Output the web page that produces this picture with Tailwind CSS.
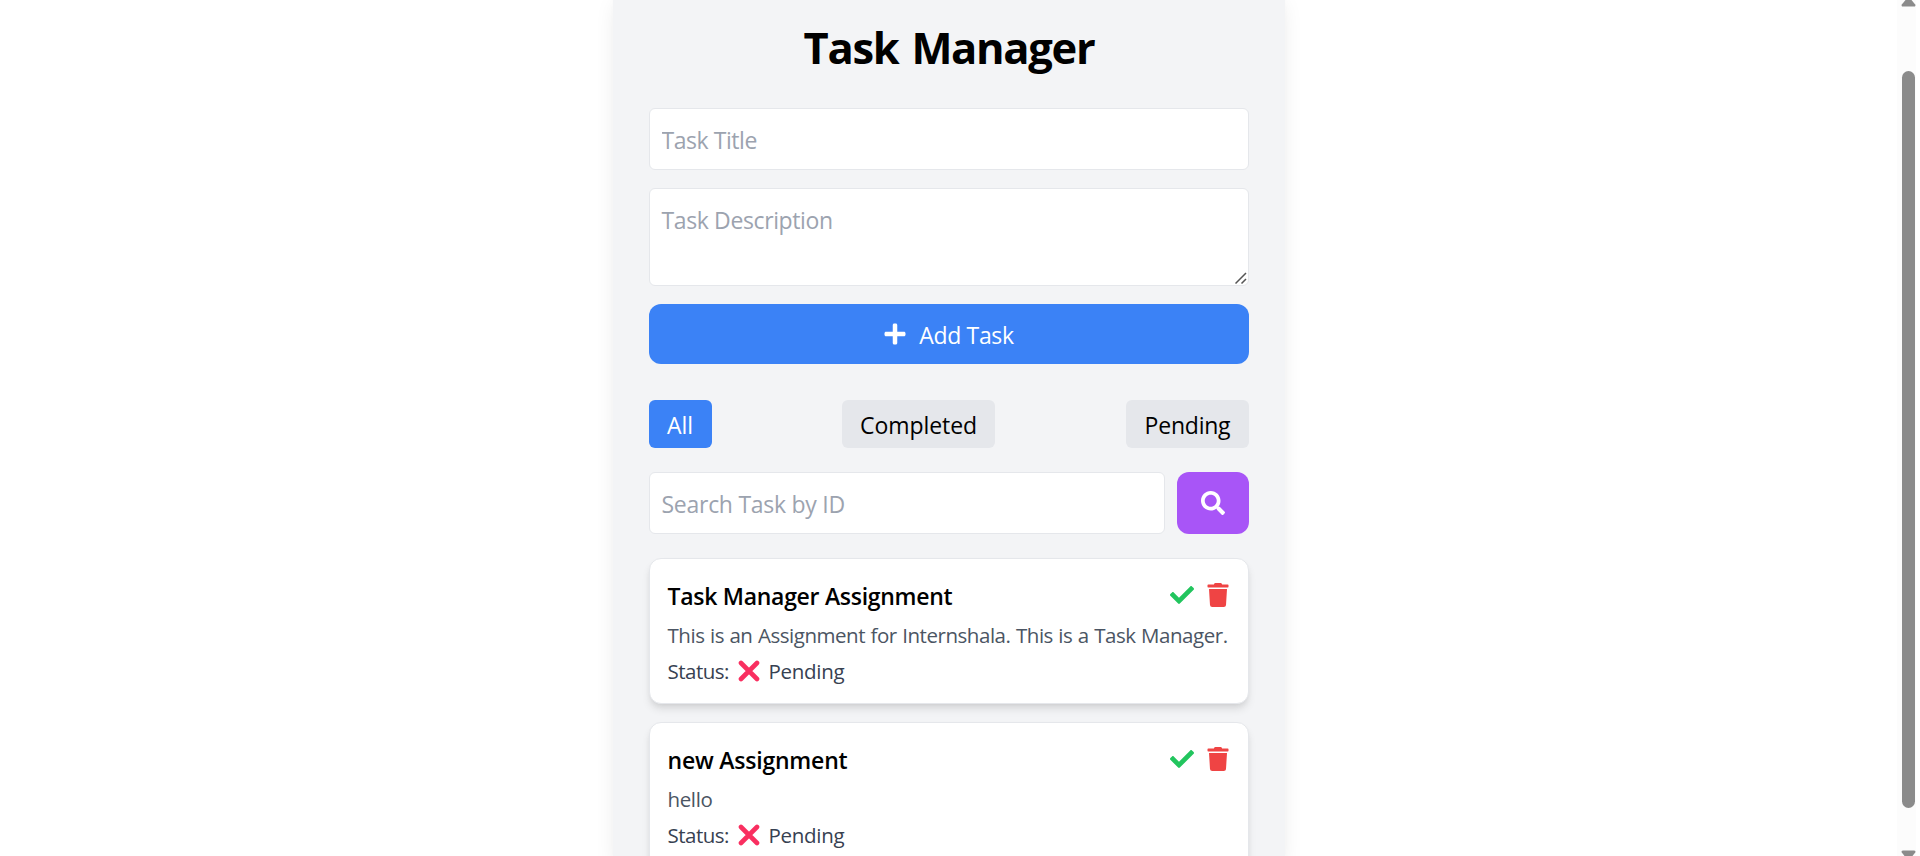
<!DOCTYPE html>
<html lang="en">
<head>
<meta charset="utf-8">
<title>Task Manager</title>
<script src="https://cdn.jsdelivr.net/npm/@tailwindcss/browser@4"></script>
</head>
<body class="h-[856px] overflow-hidden bg-white text-black font-['Open_Sans','Noto_Sans',sans-serif] text-[23px] leading-9">
<svg class="hidden">
  <symbol id="check" viewBox="0 0 512 512"><path d="M173.898 439.404l-166.4-166.4c-9.997-9.997-9.997-26.206 0-36.204l36.203-36.204c9.997-9.998 26.207-9.998 36.204 0L192 312.69 432.095 72.596c9.997-9.997 26.207-9.997 36.204 0l36.203 36.204c9.997 9.997 9.997 26.206 0 36.204l-294.4 294.401c-9.998 9.997-26.207 9.997-36.204-.001z"/></symbol>
  <symbol id="trash" viewBox="0 0 448 512"><path d="M432 32H312l-9.4-18.7A24 24 0 0 0 281.1 0H166.8a23.72 23.72 0 0 0-21.4 13.3L136 32H16A16 16 0 0 0 0 48v32a16 16 0 0 0 16 16h416a16 16 0 0 0 16-16V48a16 16 0 0 0-16-16zM53.2 467a48 48 0 0 0 47.9 45h245.8a48 48 0 0 0 47.9-45L416 128H32z"/></symbol>
  <symbol id="cross" viewBox="0 0 22 22"><path d="M3 3L19 19M19 3L3 19" stroke="#f92f60" stroke-width="4.6" stroke-linecap="round" fill="none"/></symbol>
</svg>
<div class="flex h-full">
  <div class="flex h-full flex-1 justify-center">
    <main class="-mt-4 ml-[1px] h-[872px] w-[672px] shrink-0 rounded-t-xl bg-gray-100 px-9 pt-9 shadow-[0_15px_22.5px_-4.5px_rgba(0,0,0,0.1),0_6px_9px_-6px_rgba(0,0,0,0.1)]">
      <h1 class="h-[54px] pt-px text-center text-[43.5px] font-bold leading-[54px] tracking-[-1.3px] [word-spacing:3px]">Task Manager</h1>

      <input class="mt-[34px] block h-[62px] w-full rounded-md border border-gray-200 bg-white px-[11.5px] pt-0.5 tracking-[-0.45px] placeholder:text-[#9ca3af]" placeholder="Task Title">
      <div class="relative mt-[18px] h-[98px]">
        <textarea class="block h-full w-full resize-none rounded-md border border-gray-200 bg-white px-[11.5px] pt-[13px] tracking-[-0.38px] placeholder:text-[#9ca3af]" placeholder="Task Description"></textarea>
        <svg class="absolute bottom-0.5 right-0.5 size-3" viewBox="0 0 12 12" fill="none" stroke="#555" stroke-width="1.5"><path d="M.5 11.5L11 1M6.5 11.5L11 7"/></svg>
      </div>
      <button class="mt-[18px] flex h-[60px] w-full items-center justify-center gap-3 rounded-xl bg-[#3b82f6] pr-px text-white">
        <svg class="size-6" viewBox="0 0 448 512" fill="currentColor"><path d="M416 208H272V64c0-17.67-14.33-32-32-32h-32c-17.67 0-32 14.33-32 32v144H32c-17.67 0-32 14.33-32 32v32c0 17.67 14.33 32 32 32h144v144c0 17.67 14.33 32 32 32h32c17.67 0 32-14.33 32-32V304h144c17.67 0 32-14.33 32-32v-32c0-17.67-14.33-32-32-32z"/></svg>
        <span class="pt-0.5 tracking-[-0.35px]">Add Task</span>
      </button>

      <div class="mt-9 flex h-12 justify-between">
        <button class="w-[63px] rounded-md bg-[#3b82f6] pr-px pt-0.5 text-white">All</button>
        <button class="-ml-0.5 w-[153px] rounded-md bg-gray-200 pl-px pt-0.5 tracking-[-0.07px]">Completed</button>
        <button class="w-[123px] rounded-md bg-gray-200 pt-0.5 tracking-[-0.22px]">Pending</button>
      </div>

      <div class="mt-6 flex h-[62px] gap-3">
        <input class="min-w-0 flex-1 rounded-md border border-gray-200 bg-white px-[11.5px] pt-0.5 tracking-[-0.27px] placeholder:text-[#9ca3af]" placeholder="Search Task by ID">
        <button class="flex w-[72px] items-center justify-center rounded-xl bg-[#a855f7] text-white">
          <svg class="size-6" viewBox="0 0 512 512" fill="currentColor"><path d="M505 442.7L405.3 343c-4.5-4.5-10.6-7-17-7H372c27.6-35.3 44-79.7 44-128C416 93.1 322.9 0 208 0S0 93.1 0 208s93.1 208 208 208c48.3 0 92.7-16.4 128-44v16.3c0 6.4 2.5 12.5 7 17l99.7 99.7c9.4 9.4 24.6 9.4 33.9 0l28.3-28.3c9.4-9.4 9.4-24.6.1-34zM208 336c-70.7 0-128-57.2-128-128 0-70.7 57.2-128 128-128 70.7 0 128 57.2 128 128 0 70.7-57.2 128-128 128z"/></svg>
        </button>
      </div>

      <ul class="-mx-6 mt-3 flex h-[310px] flex-col gap-[18px] overflow-hidden px-6 pt-3">
        <li class="flex h-[146px] shrink-0 flex-col gap-1.5 rounded-xl border border-gray-200 bg-white pl-[17.5px] pr-[18px] pt-[19px] shadow-[0_6px_9px_-1.5px_rgba(0,0,0,0.1),0_3px_6px_-3px_rgba(0,0,0,0.1)]">
          <div class="flex h-9 justify-between">
            <h2 class="font-semibold tracking-[-0.28px]">Task Manager Assignment</h2>
            <div class="flex gap-3 pt-[5px]">
              <svg class="size-6 fill-[#22c55e]"><use href="#check"/></svg>
              <svg class="size-6 fill-[#ef4444]"><use href="#trash"/></svg>
            </div>
          </div>
          <p class="whitespace-nowrap text-[20.5px] leading-[30px] tracking-[-0.46px] [word-spacing:0.6px] text-[#4b5563]">This is an Assignment for Internshala. This is a Task Manager.</p>
          <p class="flex text-[20.5px] leading-[30px] tracking-[-0.5px] text-[#374151]"><span class="w-[70px]">Status:</span><svg class="mt-1 size-[22px]"><use href="#cross"/></svg><span class="ml-[9px] tracking-[-0.28px]">Pending</span></p>
        </li>
        <li class="flex h-[146px] shrink-0 flex-col gap-1.5 rounded-xl border border-gray-200 bg-white pl-[17.5px] pr-[18px] pt-[19px] shadow-[0_6px_9px_-1.5px_rgba(0,0,0,0.1),0_3px_6px_-3px_rgba(0,0,0,0.1)]">
          <div class="flex h-9 justify-between">
            <h2 class="font-semibold tracking-[-0.21px]">new Assignment</h2>
            <div class="flex gap-3 pt-[5px]">
              <svg class="size-6 fill-[#22c55e]"><use href="#check"/></svg>
              <svg class="size-6 fill-[#ef4444]"><use href="#trash"/></svg>
            </div>
          </div>
          <p class="text-[20.5px] leading-[30px] tracking-[-0.36px] text-[#4b5563]">hello</p>
          <p class="flex text-[20.5px] leading-[30px] tracking-[-0.5px] text-[#374151]"><span class="w-[70px]">Status:</span><svg class="mt-1 size-[22px]"><use href="#cross"/></svg><span class="ml-[9px] tracking-[-0.28px]">Pending</span></p>
        </li>
      </ul>
    </main>
  </div>
  <!-- Scrollbar -->
  <div class="mr-1 flex h-full w-[19px] flex-col items-center bg-[#fcfcfc] pl-1">
    <svg class="h-[7px] w-[15px] shrink-0" viewBox="0 0 15 7" fill="#8b8b8b"><path d="M4.5 0H10.5L14.2 4.5Q15 6.5 13 6.5H2Q0 6.5.8 4.5Z"/></svg>
    <div class="mt-16 h-[737px] w-[13px] shrink-0 rounded-full bg-[#8b8b8b]"></div>
    <svg class="mt-[42px] h-[6px] w-[15px] shrink-0" viewBox="0 0 15 6" fill="#8b8b8b"><path d="M2 .5H13Q15 .5 14.2 2.5L11.5 6H3.5L.8 2.5Q0 .5 2 .5Z"/></svg>
  </div>
</div>
</body>
</html>
